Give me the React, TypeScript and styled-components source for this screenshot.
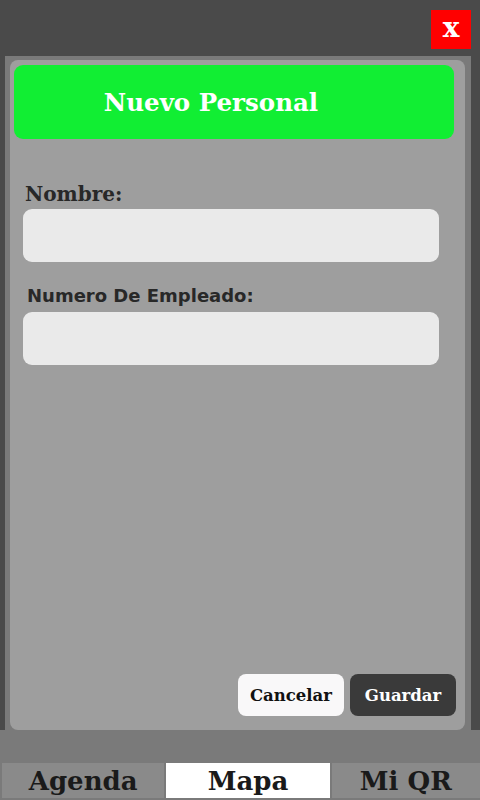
import React from "react";
import styled, { createGlobalStyle } from "styled-components";

const GlobalStyle = createGlobalStyle`
  html, body {
    margin: 0;
    padding: 0;
    background: #4a4a4a;
  }
  * {
    box-sizing: border-box;
  }
`;

const Screen = styled.div`
  width: 480px;
  height: 800px;
  display: flex;
  flex-direction: column;
  background: linear-gradient(to bottom, #4a4a4a 0px, #4a4a4a 730px, #7a7a7a 730px);
  overflow: hidden;
`;

const TopBar = styled.div`
  height: 56px;
  display: flex;
  justify-content: flex-end;
  align-items: flex-start;
  padding: 10px 9px 0 0;
`;

const CloseBtn = styled.button`
  width: 40px;
  height: 39px;
  border: 0;
  padding: 0 0 4px;
  background: #ff0000;
  color: #ffffff;
  font-family: "DejaVu Serif", serif;
  font-weight: bold;
  font-size: 28px;
  line-height: 1;
`;

const Outer = styled.div`
  width: 466px;
  height: 707px;
  margin-left: 5px;
  background: #7a7a7a;
  padding: 4px 6px 33px 5px;
  display: flex;
`;

const Card = styled.div`
  flex: 1;
  background: #9e9e9e;
  border-radius: 8px;
  padding: 5px 9px 14px 4px;
  display: flex;
  flex-direction: column;
`;

const Header = styled.div`
  height: 74px;
  margin-right: 2px;
  background: #11ee33;
  border-radius: 9px;
  display: flex;
  align-items: center;
  justify-content: center;
  padding-right: 46px;
  color: #ffffff;
  font-family: "DejaVu Serif", serif;
  font-weight: bold;
  font-size: 24.5px;
`;

const Field = styled.div<{ $top: number }>`
  display: flex;
  flex-direction: column;
  margin-top: ${(p) => p.$top}px;
  padding-left: 9px;
  padding-right: 17px;
`;

const Label = styled.label<{ $serif?: boolean }>`
  color: #282828;
  font-weight: bold;
  font-family: ${(p) => (p.$serif ? '"DejaVu Serif", serif' : '"DejaVu Sans", sans-serif')};
  font-size: ${(p) => (p.$serif ? 20 : 18)}px;
  padding-left: ${(p) => (p.$serif ? 2 : 4)}px;
  line-height: 1.2;
  margin-bottom: ${(p) => (p.$serif ? 3 : 5)}px;
`;

const Input = styled.input`
  height: 53px;
  border: 0;
  border-radius: 9px;
  background: #eaeaea;
  outline: none;
`;

const Actions = styled.div`
  margin-top: auto;
  display: flex;
  justify-content: flex-end;
  gap: 6px;
`;

const ActionBtn = styled.button<{ $dark?: boolean }>`
  width: 106px;
  height: 42px;
  border: 0;
  border-radius: 8px;
  background: ${(p) => (p.$dark ? "#3a3a3a" : "#f9f8f9")};
  color: ${(p) => (p.$dark ? "#ffffff" : "#111111")};
  font-family: "DejaVu Serif", serif;
  font-weight: bold;
  font-size: 16.5px;
`;

const Nav = styled.nav`
  height: 37px;
  display: flex;
  background: #7a7a7a;
  padding-left: 2px;
`;

const Tab = styled.div<{ $active?: boolean; $w: number }>`
  width: ${(p) => p.$w}px;
  height: 35px;
  display: flex;
  align-items: center;
  justify-content: center;
  background: ${(p) => (p.$active ? "#ffffff" : "#8a8a8a")};
  color: #1a1a1a;
  font-family: "DejaVu Serif", serif;
  font-weight: bold;
  font-size: 26px;
  & + & {
    margin-left: ${(p) => (p.$active ? 0 : 2)}px;
  }
`;

export default function App() {
  return (
    <>
      <GlobalStyle />
      <Screen>
        <TopBar>
          <CloseBtn>x</CloseBtn>
        </TopBar>
        <Outer>
          <Card>
            <Header>Nuevo Personal</Header>
            <Field $top={43}>
              <Label $serif>Nombre:</Label>
              <Input />
            </Field>
            <Field $top={23}>
              <Label>Numero De Empleado:</Label>
              <Input />
            </Field>
            <Actions>
              <ActionBtn>Cancelar</ActionBtn>
              <ActionBtn $dark>Guardar</ActionBtn>
            </Actions>
          </Card>
        </Outer>
        <Nav>
          <Tab $w={163}>Agenda</Tab>
          <Tab $w={164} $active>Mapa</Tab>
          <Tab $w={149}>Mi QR</Tab>
        </Nav>
      </Screen>
    </>
  );
}
